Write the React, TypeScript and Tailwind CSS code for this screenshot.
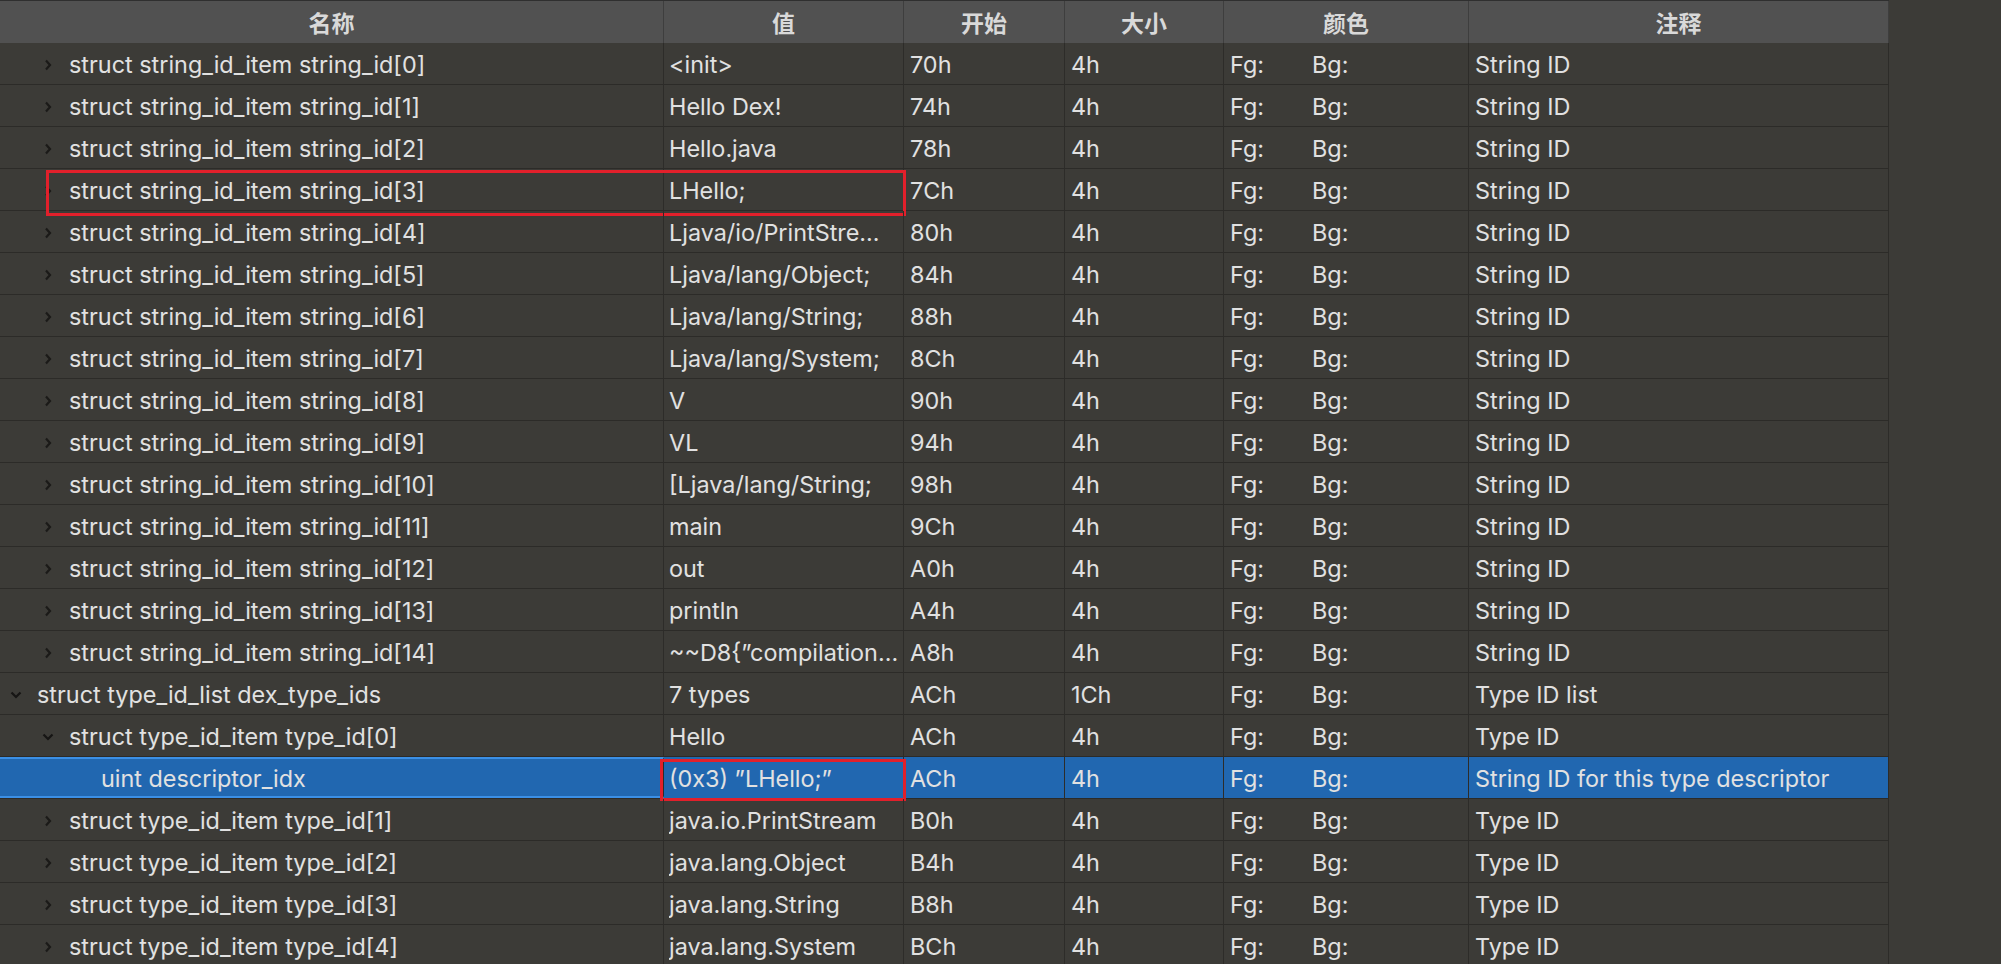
import { ReactNode } from 'react'

type Row = {
  name: string
  value: string
  start: string
  size: string
  note: string
  level: number
  chevron?: 'right' | 'down'
  selected?: boolean
  marked?: boolean
}

const stringValues = [
  '<init>',
  'Hello Dex!',
  'Hello.java',
  'LHello;',
  'Ljava/io/PrintStre…',
  'Ljava/lang/Object;',
  'Ljava/lang/String;',
  'Ljava/lang/System;',
  'V',
  'VL',
  '[Ljava/lang/String;',
  'main',
  'out',
  'println',
  '~~D8{”compilation…',
]
const stringStarts = ['70h', '74h', '78h', '7Ch', '80h', '84h', '88h', '8Ch', '90h', '94h', '98h', '9Ch', 'A0h', 'A4h', 'A8h']

const rows: Row[] = [
  ...stringValues.map((v, i) => ({
    name: `struct string_id_item string_id[${i}]`,
    value: v,
    start: stringStarts[i],
    size: '4h',
    note: 'String ID',
    level: 1,
    chevron: 'right' as const,
    marked: i === 3,
  })),
  { name: 'struct type_id_list dex_type_ids', value: '7 types', start: 'ACh', size: '1Ch', note: 'Type ID list', level: 0, chevron: 'down' },
  { name: 'struct type_id_item type_id[0]', value: 'Hello', start: 'ACh', size: '4h', note: 'Type ID', level: 1, chevron: 'down' },
  { name: 'uint descriptor_idx', value: '(0x3) ”LHello;”', start: 'ACh', size: '4h', note: 'String ID for this type descriptor', level: 2, selected: true },
  { name: 'struct type_id_item type_id[1]', value: 'java.io.PrintStream', start: 'B0h', size: '4h', note: 'Type ID', level: 1, chevron: 'right' },
  { name: 'struct type_id_item type_id[2]', value: 'java.lang.Object', start: 'B4h', size: '4h', note: 'Type ID', level: 1, chevron: 'right' },
  { name: 'struct type_id_item type_id[3]', value: 'java.lang.String', start: 'B8h', size: '4h', note: 'Type ID', level: 1, chevron: 'right' },
  { name: 'struct type_id_item type_id[4]', value: 'java.lang.System', start: 'BCh', size: '4h', note: 'Type ID', level: 1, chevron: 'right' },
]

const indent = ['pl-[4px]', 'pl-[36px]', 'pl-[68px]']

function Chevron({ dir }: { dir?: 'right' | 'down' }) {
  return (
    <span className="w-[24px] mr-[9px] flex items-center justify-center shrink-0">
      {dir === 'right' && (
        <svg width="8" height="12" viewBox="0 0 8 12">
          <polyline points="2,1.5 6,6 2,10.5" fill="none" stroke="#1b1a18" strokeWidth="2.2" />
        </svg>
      )}
      {dir === 'down' && (
        <svg width="12" height="8" viewBox="0 0 12 8">
          <polyline points="1.5,1.5 6,6 10.5,1.5" fill="none" stroke="#161514" strokeWidth="2.2" />
        </svg>
      )}
    </span>
  )
}

function Cell({ w, children, className = '' }: { w: string; children?: ReactNode; className?: string }) {
  return (
    <div className={`${w} h-full shrink-0 border-r border-[#2d2c29] flex items-center overflow-hidden whitespace-nowrap pt-[2px] ${className}`}>
      {children}
    </div>
  )
}

function HeadCell({ w, label }: { w: string; label: string }) {
  return (
    <div className={`${w} h-full shrink-0 border-r border-[#3e3e3e] flex items-center justify-center`}>
      {label}
    </div>
  )
}

export default function App() {
  return (
    <div className="w-[2001px] h-[964px] overflow-hidden bg-[#3c3b37] text-[23.4px] text-[#e1e1e1] font-['Inter','Noto_Sans_CJK_SC',sans-serif]">
      {/* header */}
      <div className="w-[1889px] h-[43px] border-t border-[#2f2f2f] bg-[#515151] flex text-[#d9d9d9] text-[23px] font-semibold font-['Noto_Sans_CJK_SC',sans-serif]">
        <HeadCell w="w-[664px]" label="名称" />
        <HeadCell w="w-[240px]" label="值" />
        <HeadCell w="w-[161px]" label="开始" />
        <HeadCell w="w-[159px]" label="大小" />
        <HeadCell w="w-[245px]" label="颜色" />
        <HeadCell w="w-[420px]" label="注释" />
      </div>

      {rows.map((r, i) => (
        <div
          key={i}
          className={`relative w-[1889px] h-[42px] flex border-b border-[#2c2b28] ${r.selected ? 'bg-[#2167b0]' : ''}`}
        >
          <Cell w="w-[664px]" className={`${indent[r.level]} ${r.selected ? 'border-y-2 border-y-[#3b8fe5]' : ''}`}>
            <Chevron dir={r.chevron} />
            <span>{r.name}</span>
          </Cell>
          <Cell w="w-[240px]" className="pl-[5px]">
            <span className="truncate">{r.value}</span>
          </Cell>
          <Cell w="w-[161px]" className="pl-[6px]">{r.start}</Cell>
          <Cell w="w-[159px]" className="pl-[6px]">{r.size}</Cell>
          <Cell w="w-[245px]" className="pl-[6px]">
            <span className="w-[82px]">Fg:</span>
            <span>Bg:</span>
          </Cell>
          <Cell w="w-[420px]" className="pl-[6px]">{r.note}</Cell>

          {r.marked && (
            <div className="absolute left-[46px] top-[1px] w-[860px] h-[46px] border-[3px] border-[#e2202b] pointer-events-none" />
          )}
          {r.selected && (
            <div className="absolute left-[660px] top-[2px] w-[246px] h-[42px] border-[3px] border-[#e2202b] pointer-events-none" />
          )}
        </div>
      ))}
    </div>
  )
}
